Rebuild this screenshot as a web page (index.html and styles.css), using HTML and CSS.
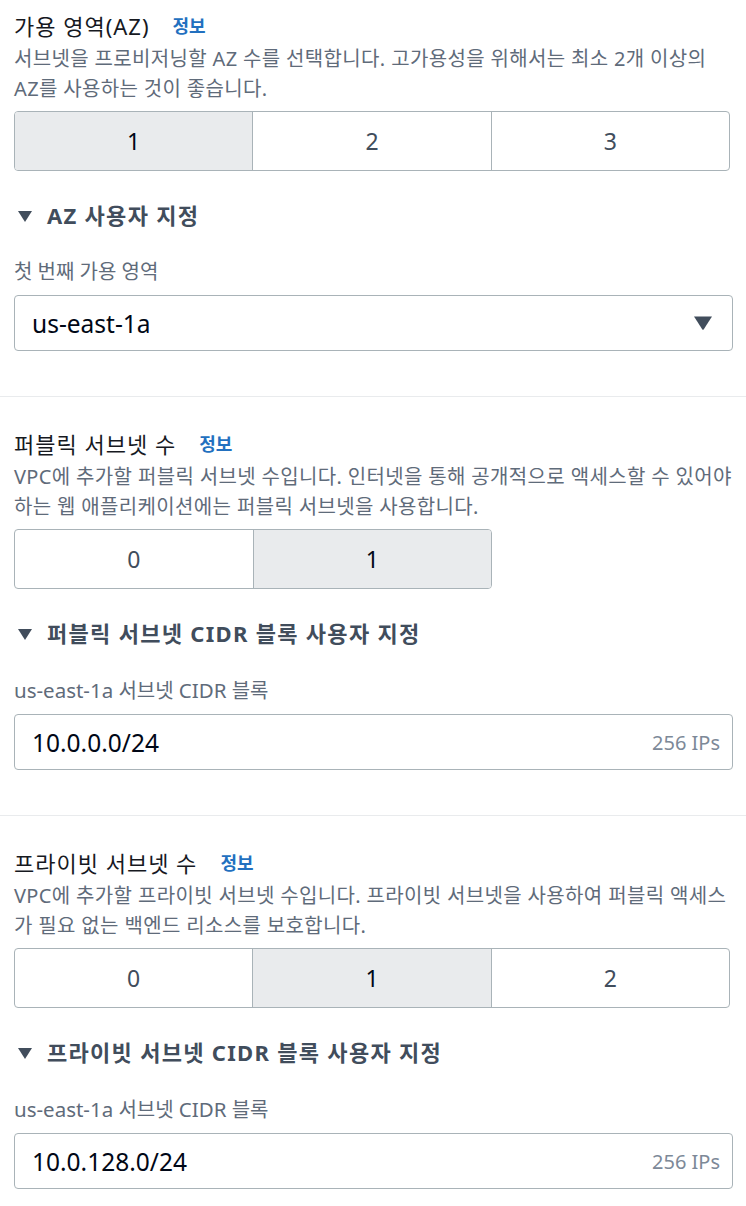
FILE: index.html
```html
<!DOCTYPE html>
<html lang="ko">
<head>
<meta charset="utf-8">
<link rel="stylesheet" href="styles.css">
</head>
<body>
<section class="section first">
  <div class="title"><span>가용 영역(AZ)</span><a class="info">정보</a></div>
  <p class="desc">서브넷을 프로비저닝할 AZ 수를 선택합니다. 고가용성을 위해서는 최소 2개 이상의<br>AZ를 사용하는 것이 좋습니다.</p>
  <div class="seg seg3">
    <div class="opt on">1</div>
    <div class="opt">2</div>
    <div class="opt">3</div>
  </div>
  <div class="expand"><span class="tri"></span>AZ 사용자 지정</div>
  <div class="label">첫 번째 가용 영역</div>
  <div class="field select">
    <span class="val">us-east-1a</span>
    <svg class="caret" width="18" height="14" viewBox="0 0 18 14"><path d="M0 0.5 H18 L9.8 13.3 Q9 14.3 8.2 13.3 Z" fill="#414d5c"/></svg>
  </div>
</section>
<section class="section">
  <div class="title"><span>퍼블릭 서브넷 수</span><a class="info">정보</a></div>
  <p class="desc">VPC에 추가할 퍼블릭 서브넷 수입니다. 인터넷을 통해 공개적으로 액세스할 수 있어야<br>하는 웹 애플리케이션에는 퍼블릭 서브넷을 사용합니다.</p>
  <div class="seg seg2">
    <div class="opt">0</div>
    <div class="opt on">1</div>
  </div>
  <div class="expand"><span class="tri"></span>퍼블릭 서브넷 CIDR 블록 사용자 지정</div>
  <div class="label"><span class="en">us-east-1a</span> 서브넷 <span class="en">CIDR</span> 블록</div>
  <div class="field">
    <span class="val">10.0.0.0/24</span>
    <span class="ips">256 IPs</span>
  </div>
</section>
<section class="section last">
  <div class="title"><span>프라이빗 서브넷 수</span><a class="info">정보</a></div>
  <p class="desc">VPC에 추가할 프라이빗 서브넷 수입니다. 프라이빗 서브넷을 사용하여 퍼블릭 액세스<br>가 필요 없는 백엔드 리소스를 보호합니다.</p>
  <div class="seg seg3">
    <div class="opt">0</div>
    <div class="opt on">1</div>
    <div class="opt">2</div>
  </div>
  <div class="expand"><span class="tri"></span>프라이빗 서브넷 CIDR 블록 사용자 지정</div>
  <div class="label"><span class="en">us-east-1a</span> 서브넷 <span class="en">CIDR</span> 블록</div>
  <div class="field">
    <span class="val">10.0.128.0/24</span>
    <span class="ips">256 IPs</span>
  </div>
</section>
</body>
</html>
```

FILE: styles.css
```css
* { box-sizing: border-box; }
html, body { margin: 0; padding: 0; background: #fff; overflow-x: hidden; }
body {
  font-family: "Noto Sans", "Noto Sans CJK KR", sans-serif;
  color: #000716;
  width: 746px;
}
.section {
  padding: 32px 13px 45px 14px;
  border-bottom: 1px solid #e9ebed;
}
.section.first { padding-top: 11px; }
.section.last { border-bottom: none; }
.title {
  font-size: 22px;
  line-height: 30px;
  height: 30px;
  color: #16191f;
  display: flex;
  align-items: center;
  letter-spacing: 1px;
}
.info {
  color: #2270bf;
  font-weight: 700;
  font-size: 18px;
  letter-spacing: 0;
  margin-left: 23px;
}
.desc {
  margin: 3px -24px 0 0;
  font-size: 20px;
  line-height: 30px;
  color: #5f6b7a;
  letter-spacing: 0.35px;
}
.seg {
  margin-top: 7px;
  display: flex;
  height: 60px;
  border: 1px solid #a9b3b8;
  border-radius: 4px;
  overflow: hidden;
}
.seg3 { width: 716px; }
.seg2 { width: 478px; }
.opt {
  flex: 1;
  display: flex;
  align-items: center;
  justify-content: center;
  font-size: 23px;
  color: #414d5c;
  border-left: 1px solid #a9b3b8;
}
.opt:first-child { border-left: none; }
.opt.on { background: #e9ebed; color: #000716; }
.expand {
  margin-top: 29px;
  font-size: 22px;
  line-height: 30px;
  font-weight: 700;
  color: #414d5c;
  display: flex;
  align-items: center;
  letter-spacing: 1.3px;
}
.tri {
  width: 0; height: 0;
  border-left: 7.5px solid transparent;
  border-right: 7.5px solid transparent;
  border-top: 11px solid #414d5c;
  margin: 3px 15px 0 4px;
}
.label {
  margin-top: 29px;
  font-size: 20px;
  line-height: 26px;
  color: #5f6b7a;
}
.label .en { font-size: 20.5px; }
.field {
  margin-top: 10px;
  height: 56px;
  width: 719px;
  border: 1px solid #a9b3b8;
  border-radius: 4px;
  display: flex;
  align-items: center;
  justify-content: space-between;
  padding: 0 12px 0 17px;
}
.val { font-size: 24.5px; color: #000716; }
.ips { font-size: 20px; color: #7d8998; }
.select { padding-right: 20px; }
.caret { display: block; }
```
